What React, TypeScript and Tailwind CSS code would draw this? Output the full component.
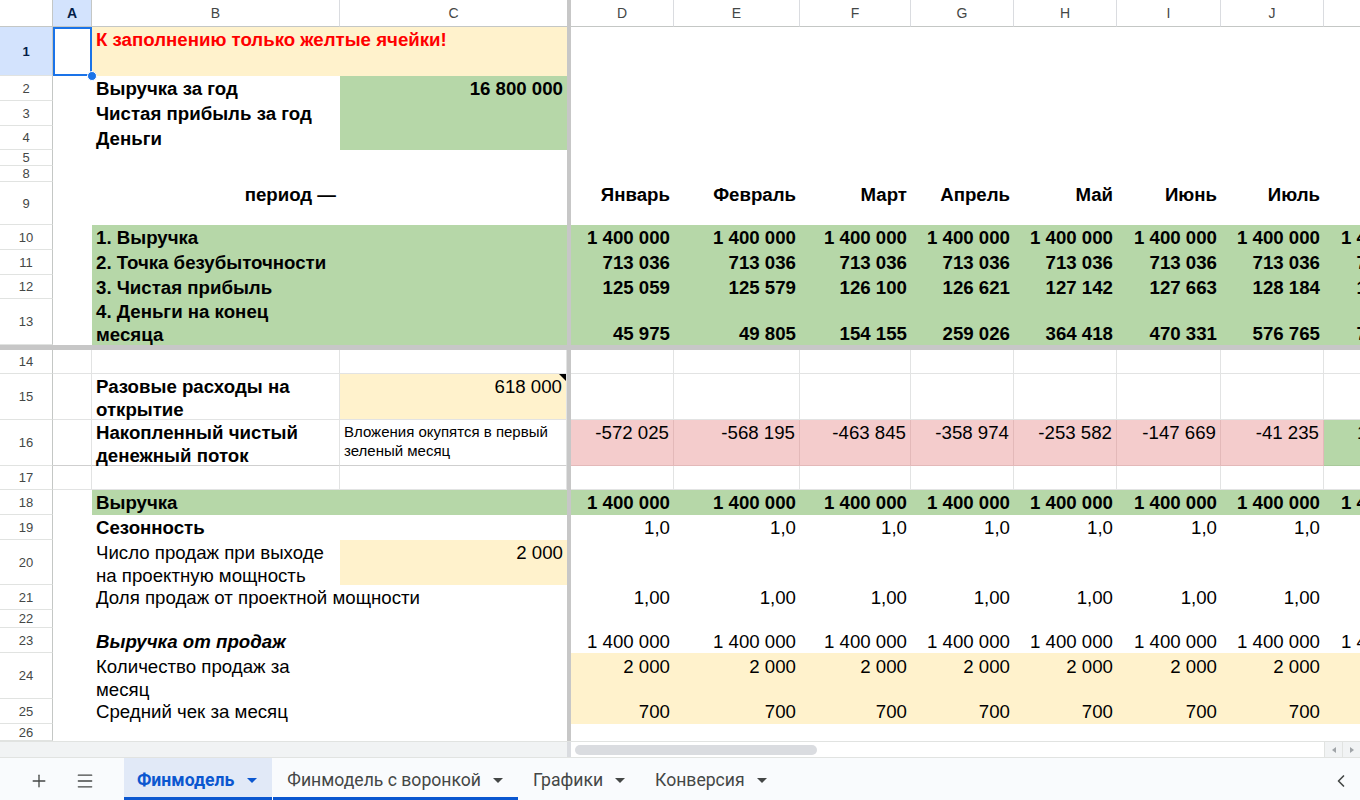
import React from 'react';
import { Plus, Menu, ChevronLeft } from 'lucide-react';

const COLS = ['D', 'E', 'F', 'G', 'H', 'I', 'J', 'K'];
const colW: Record<string, string> = {
  D: 'w-[103px]',
  E: 'w-[126px]',
  F: 'w-[111px]',
  G: 'w-[103px]',
  H: 'w-[103px]',
  I: 'w-[104px]',
  J: 'w-[103px]',
  K: 'w-[104px]',
};

const grid = 'border-r border-b border-[#e2e3e3]';
const top = 'pt-[1px] leading-[23px]';

// row header + cells
function Row({ n, h, sel, children }: { n: number; h: string; sel?: boolean; children?: React.ReactNode }) {
  return (
    <div className={`flex shrink-0 ${h}`}>
      <div
        className={`w-[53px] shrink-0 flex items-center justify-center border-r border-b border-r-[#c4c7c5] border-b-[#e1e3e1] text-[13px] leading-none ${
          sel ? 'bg-[#d3e3fd] font-bold text-[#041e49]' : 'bg-white text-[#444746]'
        }`}
      >
        {n}
      </div>
      {children}
    </div>
  );
}

function Cell({ w, cls = '', children }: { w: string; cls?: string; children?: React.ReactNode }) {
  return <div className={`${w} shrink-0 h-full px-[4px] whitespace-nowrap ${cls}`}>{children}</div>;
}

const A = ({ cls = '' }: { cls?: string }) => <div className={`w-[39px] shrink-0 h-full ${cls}`} />;
const Split = () => <div className="w-[4px] shrink-0 h-full bg-[#c7c7c7]" />;

function Vals({ vals, cls = '' }: { vals: string[]; cls?: string }) {
  return (
    <>
      {COLS.map((c, i) => (
        <div key={c} className={`${colW[c]} shrink-0 h-full px-[4px] text-right whitespace-nowrap ${cls}`}>
          {vals[i]}
        </div>
      ))}
    </>
  );
}

const Tri = () => (
  <svg width="10" height="5" viewBox="0 0 10 5" className="shrink-0">
    <polygon points="0,0 10,0 5,5" fill="currentColor" />
  </svg>
);

const months = ['Январь', 'Февраль', 'Март', 'Апрель', 'Май', 'Июнь', 'Июль', ''];
const rev = Array(8).fill('1 400 000');
const be = Array(8).fill('713 036');
const np = ['125 059', '125 579', '126 100', '126 621', '127 142', '127 663', '128 184', '128 705'];
const cash = ['45 975', '49 805', '154 155', '259 026', '364 418', '470 331', '576 765', '783 720'];
const cum = ['-572 025', '-568 195', '-463 845', '-358 974', '-253 582', '-147 669', '-41 235', '116 431'];

export default function App() {
  return (
    <div className="w-[1360px] h-[800px] overflow-hidden bg-white flex flex-col font-['Liberation_Sans',Arial,sans-serif] text-black">
      {/* column headers */}
      <div className="flex h-[27px] shrink-0 text-[14px] text-[#444746]">
        <div className="w-[53px] shrink-0 border-r border-b border-[#c4c7c5] bg-white" />
        <div className="w-[39px] shrink-0 flex items-center justify-center bg-[#d3e3fd] font-bold text-[#041e49] border-r border-b border-[#c4c7c5]">
          A
        </div>
        <div className="w-[248px] shrink-0 flex items-center justify-center border-r border-b border-[#dadce0] border-b-[#c4c7c5]">B</div>
        <div className="w-[227px] shrink-0 flex items-center justify-center border-b border-[#c4c7c5]">C</div>
        <Split />
        {COLS.map((c) => (
          <div key={c} className={`${colW[c]} shrink-0 flex items-center justify-center border-r border-b border-[#dadce0] border-b-[#c4c7c5]`}>
            {c}
          </div>
        ))}
      </div>

      {/* sheet */}
      <div className="flex flex-col h-[714px] shrink-0 overflow-hidden text-[18.67px]">
        <Row n={1} h="h-[49px]" sel>
          <div className="w-[39px] shrink-0 h-full relative">
            <div className="absolute inset-0 border-2 border-[#1a73e8]" />
            <div className="absolute -right-[5px] -bottom-[5px] w-[10px] h-[10px] rounded-full bg-[#1a73e8] border border-white z-10" />
          </div>
          <Cell w="w-[475px]" cls={`bg-[#fff2cc] font-bold text-[#ff0000] ${top}`}>
            К заполнению только желтые ячейки!
          </Cell>
          <Split />
        </Row>
        <Row n={2} h="h-[25px]">
          <A />
          <Cell w="w-[248px]" cls={`font-bold ${top}`}>Выручка за год</Cell>
          <Cell w="w-[227px]" cls={`bg-[#b6d7a8] font-bold text-right ${top}`}>16 800 000</Cell>
          <Split />
        </Row>
        <Row n={3} h="h-[25px]">
          <A />
          <Cell w="w-[248px]" cls={`font-bold ${top}`}>Чистая прибыль за год</Cell>
          <Cell w="w-[227px]" cls="bg-[#b6d7a8]" />
          <Split />
        </Row>
        <Row n={4} h="h-[24px]">
          <A />
          <Cell w="w-[248px]" cls={`font-bold ${top}`}>Деньги</Cell>
          <Cell w="w-[227px]" cls="bg-[#b6d7a8]" />
          <Split />
        </Row>
        <Row n={5} h="h-[16px]">
          <A />
          <Cell w="w-[475px]" />
          <Split />
        </Row>
        <Row n={8} h="h-[16px]">
          <A />
          <Cell w="w-[475px]" />
          <Split />
        </Row>
        <Row n={9} h="h-[43px]">
          <A />
          <Cell w="w-[248px]" cls={`font-bold text-right ${top}`}>период —</Cell>
          <Cell w="w-[227px]" />
          <Split />
          <Vals vals={months} cls={`font-bold ${top}`} />
        </Row>
        <Row n={10} h="h-[25px]">
          <A />
          <Cell w="w-[248px]" cls={`bg-[#b6d7a8] font-bold ${top}`}>1. Выручка</Cell>
          <Cell w="w-[227px]" cls="bg-[#b6d7a8]" />
          <Split />
          <Vals vals={rev} cls={`bg-[#b6d7a8] font-bold ${top}`} />
        </Row>
        <Row n={11} h="h-[25px]">
          <A />
          <Cell w="w-[248px]" cls={`bg-[#b6d7a8] font-bold ${top}`}>2. Точка безубыточности</Cell>
          <Cell w="w-[227px]" cls="bg-[#b6d7a8]" />
          <Split />
          <Vals vals={be} cls={`bg-[#b6d7a8] font-bold ${top}`} />
        </Row>
        <Row n={12} h="h-[24px]">
          <A />
          <Cell w="w-[248px]" cls={`bg-[#b6d7a8] font-bold ${top}`}>3. Чистая прибыль</Cell>
          <Cell w="w-[227px]" cls="bg-[#b6d7a8]" />
          <Split />
          <Vals vals={np} cls={`bg-[#b6d7a8] font-bold ${top}`} />
        </Row>
        <Row n={13} h="h-[46px]">
          <A />
          <Cell w="w-[248px]" cls={`bg-[#b6d7a8] font-bold ${top}`}>
            4. Деньги на конец
            <br />
            месяца
          </Cell>
          <Cell w="w-[227px]" cls="bg-[#b6d7a8]" />
          <Split />
          <Vals vals={cash} cls="bg-[#b6d7a8] font-bold leading-[23px] flex items-end justify-end" />
        </Row>

        {/* frozen row line */}
        <div className="h-[5px] shrink-0 bg-[#c7c7c7]" />

        <Row n={14} h="h-[24px]">
          <A cls={grid} />
          <Cell w="w-[248px]" cls={grid} />
          <Cell w="w-[227px]" cls={grid} />
          <Split />
          <Vals vals={Array(8).fill('')} cls={grid} />
        </Row>
        <Row n={15} h="h-[46px]">
          <A cls={grid} />
          <Cell w="w-[248px]" cls={`font-bold ${top} ${grid}`}>
            Разовые расходы на
            <br />
            открытие
          </Cell>
          <Cell w="w-[227px]" cls={`bg-[#fff2cc] text-right relative ${top} ${grid}`}>
            618 000
            <div className="absolute top-0 right-0 w-0 h-0 border-l-[7px] border-l-transparent border-t-[7px] border-t-black" />
          </Cell>
          <Split />
          <Vals vals={Array(8).fill('')} cls={grid} />
        </Row>
        <Row n={16} h="h-[46px]">
          <A cls="border-r border-b border-[#e2e3e3] border-b-[#cfcfcf]" />
          <Cell w="w-[248px]" cls={`font-bold ${top} border-r border-b border-[#e2e3e3] border-b-[#cfcfcf]`}>
            Накопленный чистый
            <br />
            денежный поток
          </Cell>
          <Cell w="w-[227px]" cls="text-[15px] leading-[19px] pt-[2px] border-r border-b border-[#e2e3e3] border-b-[#cfcfcf]">
            Вложения окупятся в первый
            <br />
            зеленый месяц
          </Cell>
          <Split />
          {COLS.map((c, i) => (
            <div
              key={c}
              className={`${colW[c]} shrink-0 h-full px-[4px] text-right whitespace-nowrap ${top} border-r border-b ${
                c === 'K' ? 'bg-[#b6d7a8] border-[#a9c99b]' : 'bg-[#f4cccc] border-[#e3b9b9]'
              }`}
            >
              {cum[i]}
            </div>
          ))}
        </Row>
        <Row n={17} h="h-[24px]">
          <A cls={grid} />
          <Cell w="w-[248px]" cls={grid} />
          <Cell w="w-[227px]" cls={grid} />
          <Split />
          <Vals vals={Array(8).fill('')} cls={grid} />
        </Row>
        <Row n={18} h="h-[25px]">
          <A />
          <Cell w="w-[248px]" cls={`bg-[#b6d7a8] font-bold ${top}`}>Выручка</Cell>
          <Cell w="w-[227px]" cls="bg-[#b6d7a8]" />
          <Split />
          <Vals vals={rev} cls={`bg-[#b6d7a8] font-bold ${top}`} />
        </Row>
        <Row n={19} h="h-[25px]">
          <A />
          <Cell w="w-[248px]" cls={`font-bold ${top}`}>Сезонность</Cell>
          <Cell w="w-[227px]" />
          <Split />
          <Vals vals={Array(8).fill('1,0')} cls={top} />
        </Row>
        <Row n={20} h="h-[45px]">
          <A />
          <Cell w="w-[248px]" cls={top}>
            Число продаж при выходе
            <br />
            на проектную мощность
          </Cell>
          <Cell w="w-[227px]" cls={`bg-[#fff2cc] text-right ${top}`}>2 000</Cell>
          <Split />
          <Vals vals={Array(8).fill('')} />
        </Row>
        <Row n={21} h="h-[25px]">
          <A />
          <Cell w="w-[248px]" cls={top}>Доля продаж от проектной мощности</Cell>
          <Cell w="w-[227px]" />
          <Split />
          <Vals vals={Array(8).fill('1,00')} cls={top} />
        </Row>
        <Row n={22} h="h-[18px]">
          <A />
          <Cell w="w-[475px]" />
          <Split />
        </Row>
        <Row n={23} h="h-[25px]">
          <A />
          <Cell w="w-[248px]" cls={`font-bold italic pt-[2px] leading-[23px]`}>Выручка от продаж</Cell>
          <Cell w="w-[227px]" />
          <Split />
          <Vals vals={rev} cls="pt-[2px] leading-[23px]" />
        </Row>
        <Row n={24} h="h-[46px]">
          <A />
          <Cell w="w-[248px]" cls="pt-[2px] leading-[23px]">
            Количество продаж за
            <br />
            месяц
          </Cell>
          <Cell w="w-[227px]" />
          <Split />
          <Vals vals={Array(8).fill('2 000')} cls="bg-[#fff2cc] pt-[2px] leading-[23px]" />
        </Row>
        <Row n={25} h="h-[25px]">
          <A />
          <Cell w="w-[248px]" cls={top}>Средний чек за месяц</Cell>
          <Cell w="w-[227px]" />
          <Split />
          <Vals vals={Array(8).fill('700')} cls={`bg-[#fff2cc] ${top}`} />
        </Row>
        <Row n={26} h="h-[17px]">
          <A />
          <Cell w="w-[475px]" />
          <Split />
        </Row>
      </div>

      {/* horizontal scrollbar */}
      <div className="flex h-[16px] shrink-0 border-t border-[#e1e3e1]">
        <div className="w-[567px] shrink-0 bg-[#f1f3f4]" />
        <div className="w-[4px] shrink-0 bg-[#dadce0]" />
        <div className="flex-1 flex items-center pl-[4px]">
          <div className="w-[242px] h-[10px] rounded-full bg-[#dadce0]" />
        </div>
        <div className="w-[18px] shrink-0 flex items-center justify-center bg-[#f1f3f4] border-l border-[#e1e3e1]">
          <svg width="4" height="6" viewBox="0 0 4 6"><polygon points="4,0 4,6 0,3" fill="#a0a4a8" /></svg>
        </div>
        <div className="w-[18px] shrink-0 flex items-center justify-center bg-[#f1f3f4] border-l border-[#e1e3e1]">
          <svg width="4" height="6" viewBox="0 0 4 6"><polygon points="0,0 0,6 4,3" fill="#a0a4a8" /></svg>
        </div>
      </div>

      {/* sheet tabs */}
      <div className="flex items-stretch h-[43px] shrink-0 bg-[#f9fbfd] border-t border-[#e1e3e1] font-['Roboto',Arial,sans-serif] text-[17.6px] text-[#444746]">
        <div className="flex items-center pl-[29px] gap-[26px] pr-[29px] pt-[4px]">
          <Plus size={20} strokeWidth={1.6} />
          <Menu size={20} strokeWidth={1.6} />
        </div>
        <div className="flex items-center gap-[13px] pl-[13px] pr-[15px] pt-[5px] bg-[#e1e9f7] border-b-[3px] border-[#0b57d0] text-[#0b57d0] font-bold">
          <span>Финмодель</span>
          <Tri />
        </div>
        <div className="flex items-center gap-[12px] pl-[14px] pr-[15px] pt-[5px] ml-[1px] border-b-[3px] border-[#0b57d0]">
          <span>Финмодель с воронкой</span>
          <Tri />
        </div>
        <div className="flex items-center gap-[12px] pl-[15px] pr-[16px] pt-[2px]">
          <span>Графики</span>
          <Tri />
        </div>
        <div className="flex items-center gap-[12px] px-[14px] pt-[2px]">
          <span>Конверсия</span>
          <Tri />
        </div>
        <div className="flex-1" />
        <div className="flex items-center pr-[9px] pt-[4px]">
          <ChevronLeft size={20} strokeWidth={2} />
        </div>
      </div>
    </div>
  );
}
